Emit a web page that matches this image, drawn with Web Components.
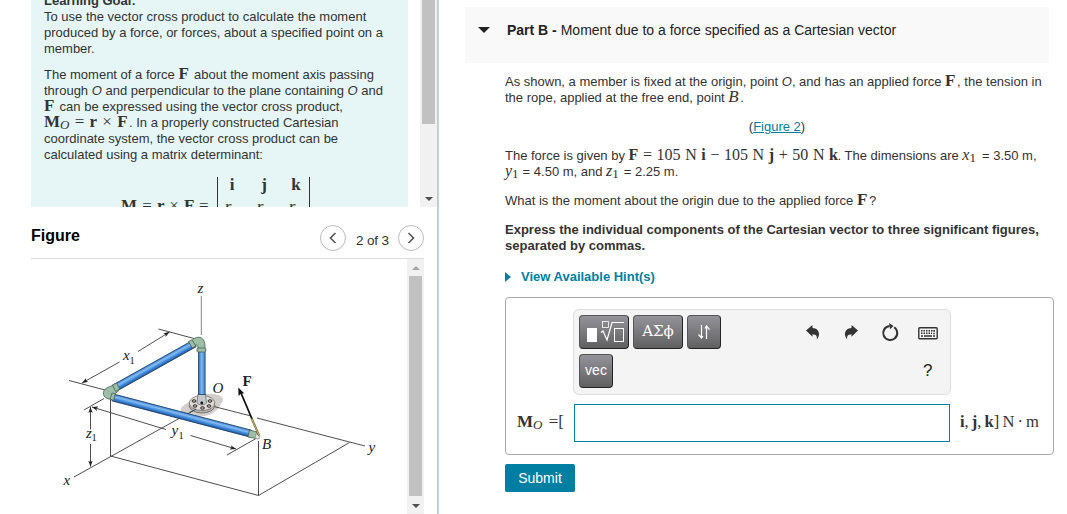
<!DOCTYPE html>
<html lang="en">
<head>
<meta charset="utf-8">
<title>Moment due to a force</title>
<style>
  html, body { margin: 0; height: 514px; overflow: hidden; background: #fff; }
  body { font-family: "Liberation Sans", Arial, sans-serif; font-size: 13px; line-height: 16px; color: #333; }
</style>
</head>
<body>
<assignment-page></assignment-page>

<script>
function define(name, html) {
  const template = document.createElement('template');
  template.innerHTML = html;
  customElements.define(name, class extends HTMLElement {
    constructor() {
      super();
      this.attachShadow({ mode: 'open' });
      this.shadowRoot.appendChild(template.content.cloneNode(true));
    }
  });
}

// Inline math. --w reserves the width of the run so the text after it lines up.
define('tex-math', `
  <style>
    :host {
      display: inline-block;
      width: var(--w, auto);
      white-space: nowrap;
      font: var(--fs, 17px)/0 "Liberation Serif", "Times New Roman", serif;
      word-spacing: var(--ws, 0);
    }
    ::slotted(sub) { font-size: 13px; line-height: 0; vertical-align: -2px; }
  </style>
  <slot></slot>
`);

class ScrollTrack extends HTMLElement {
  constructor() {
    super();
    this.attachShadow({ mode: 'open' });
  }

  connectedCallback() {
    const up = this.hasAttribute('up') ? '<div class="arrow up"></div>' : '';
    this.shadowRoot.innerHTML = `
      <style>
        :host { display: flex; flex-direction: column; align-items: center; width: 17px; background: #f1f1f1; flex: none; }
        .thumb { width: 13px; height: ${this.getAttribute('thumb')}px; background: #c1c1c1; }
        .arrow { width: 17px; height: 17px; display: flex; align-items: center; justify-content: center; }
        .arrow::before { content: ''; border: 4px solid transparent; }
        .up::before { border-bottom: 4px solid #a3a3a3; border-top: 0; }
        .down { margin-top: auto; }
        .down::before { border-top: 4px solid #505050; border-bottom: 0; }
      </style>
      ${up}
      <div class="thumb"></div>
      <div class="arrow down"></div>
    `;
  }
}
customElements.define('scroll-track', ScrollTrack);

define('learning-goal', `
  <style>
    :host { display: flex; height: 207px; overflow: hidden; justify-content: space-between; }
    .panel { width: 377px; box-sizing: border-box; padding: 0 0 0 13px; background: #e6f6f7; overflow: hidden; white-space: nowrap; }
    h2 { margin: -7px 0 0; font-size: 13px; line-height: 16px; }
    p { margin: 0 0 10px; }
    .det { display: flex; align-items: flex-start; padding: 4px 0 0 77px; font: bold 17px/20px "Liberation Serif", serif; }
    .lhs { width: 96px; margin-top: 19px; white-space: pre; word-spacing: 0.9px; }
    .matrix { display: grid; grid-template-columns: repeat(3, 32px); grid-template-rows: 15px 29px; align-items: center; width: 91px; height: 60px; border: solid #333; border-width: 0 1px; }
    .matrix span { width: 28px; text-align: center; }
    .matrix i { width: 20px; text-align: center; font-weight: normal; }
    .light { font-weight: normal; }
  </style>
  <div class="panel">
    <h2>Learning Goal:</h2>
    <p>To use the vector cross product to calculate the moment<br>produced by a force, or forces, about a specified point on a<br>member.</p>
    <p>The moment of a force <tex-math style="--w:12px"><b>F</b></tex-math> about the moment axis passing<br>through <i>O</i> and perpendicular to the plane containing <i>O</i> and<br><tex-math style="--w:12px"><b>F</b></tex-math> can be expressed using the vector cross product,<br><tex-math style="--w:85px;--ws:1px"><b>M</b><sub><i>O</i></sub> = <b>r</b> × <b>F</b></tex-math>. In a properly constructed Cartesian<br>coordinate system, the vector cross product can be<br>calculated using a matrix determinant:</p>
    <div class="det">
      <div class="lhs">M <span class="light">=</span> r <span class="light">×</span> F <span class="light">=</span></div>
      <div class="matrix"><span>i</span><span>j</span><span>k</span><i>r</i><i>r</i><i>r</i></div>
    </div>
  </div>
  <scroll-track thumb="124"></scroll-track>
`);

define('round-button', `
  <style>
    :host { display: flex; align-items: center; justify-content: center; width: 24px; height: 24px; border: 1px solid #bbb; border-radius: 50%; }
    svg { display: block; }
  </style>
  <svg width="24" height="24" fill="none" stroke="#555" stroke-width="1.6"><path d="M14.500 7 9.500 12l5 5"/></svg>
`);

define('statics-diagram', `
  <style>
    :host { display: block; width: 376px; height: 255px; }
    svg { display: block; }
    text { font-family: "Liberation Serif", "Times New Roman", serif; font-size: 15px; font-style: italic; fill: #222; }
    .sub { font-size: 10.5px; font-style: normal; }
    .force { font-weight: bold; font-style: normal; }
  </style>
  <svg width="376" height="255" viewBox="31 259 376 255">
    <defs>
      <linearGradient id="pipeV" x1="0" x2="1" y1="0" y2="0">
        <stop offset="0" stop-color="#2a6cb8"/><stop offset=".45" stop-color="#7db6ee"/><stop offset="1" stop-color="#3a84d8"/>
      </linearGradient>
      <linearGradient id="pipeH" x1="0" x2="0" y1="0" y2="1">
        <stop offset="0" stop-color="#3a82d4"/><stop offset=".35" stop-color="#86bbf0"/><stop offset=".65" stop-color="#3f8adb"/><stop offset="1" stop-color="#2059a3"/>
      </linearGradient>
      <marker id="tip" viewBox="0 0 8 6" refX="8" refY="3" markerWidth="6" markerHeight="4.5" orient="auto-start-reverse" markerUnits="userSpaceOnUse"><path d="M0 0 8 3 0 6 2 3z" fill="#222"/></marker>
    </defs>

    <!-- floor shadow and flange -->
    <path d="M181 412c-2-5 5-8 9-11 5-6 14-8 24-7 7 1 11 4 8 8-2 4-4 8-9 11-6 4-15 4-19 1-5-1-11 1-13-2z" fill="#d3cdcb"/>
    <g stroke="#3a3a3a" stroke-width=".9" fill="none">
      <path d="M201.300 296v39" stroke="#777"/>
      <path d="M110.500 399v57L258.500 495.500 349.500 442.500"/>
      <path d="M258.500 441v54.500"/>
      <path d="M196 409 74 477"/>
      <path d="M212 406l39 10M257 418l108 28"/>
      <path d="M158.500 329 194 338.500M69 380.500 105 390M84 410l20-11.500M227 455l29-16.500"/>
      <path d="M138 351.500 169.500 332" marker-end="url(#tip)"/>
      <path d="M119.500 362 82 383" marker-end="url(#tip)"/>
      <path d="M90.500 429.500V407" marker-end="url(#tip)"/>
      <path d="M90.500 444v22.500" marker-end="url(#tip)"/>
      <path d="M166 429.500 92 407" marker-end="url(#tip)"/>
      <path d="M190.500 435.500 236 449" marker-end="url(#tip)"/>
    </g>

    <ellipse cx="202" cy="405.500" rx="12.800" ry="7.500" fill="#b5b2b0" stroke="#555" stroke-width=".7"/>
    <ellipse cx="202" cy="403" rx="12.800" ry="7.500" fill="#e3dcd6" stroke="#666" stroke-width=".7"/>
    <g fill="#b9b2ad" stroke="#222" stroke-width=".9">
      <ellipse cx="194" cy="401" rx="1.900" ry="1.300"/><ellipse cx="210" cy="401" rx="1.900" ry="1.300"/>
      <ellipse cx="195" cy="406" rx="1.900" ry="1.300"/><ellipse cx="202.500" cy="408" rx="1.900" ry="1.300"/>
      <ellipse cx="209" cy="406" rx="1.900" ry="1.300"/>
    </g>
    <path d="M198 394h7.500l1 9c-2 2.500-7.500 2.500-9.500 0z" fill="#c5c8cd" stroke="#666" stroke-width=".7"/>
    <circle cx="201.800" cy="403" r="1.400" fill="#111"/>
    <path d="M196 409 190 412.500" stroke="#333" stroke-width=".8"/>

    <rect x="198.500" y="350" width="6.600" height="44.500" fill="url(#pipeV)" stroke="#1f3f66" stroke-width=".8"/>
    <g transform="translate(114 388.500) rotate(-29.200)"><rect y="-3.600" width="92" height="7.200" fill="url(#pipeH)" stroke="#1f3f66" stroke-width=".8"/></g>
    <g transform="translate(113 397.500) rotate(14.700)"><rect y="-3.500" width="142" height="7" fill="url(#pipeH)" stroke="#1f3f66" stroke-width=".8"/></g>

    <!-- elbows -->
    <g fill="#9dbfa8" stroke="#47604f" stroke-width=".8">
      <path d="M192 340.500c4-4.500 9.500-4 11.500-.5 1.500 2.500 1.500 5 1.500 8.500h-7c0-3.500-1-4.500-3.500-2.500z"/>
      <path d="M188.500 341.500l3.500-1.800 3.800 6.200-3.500 2.200z"/>
      <rect x="197" y="348" width="8.800" height="4" rx="1"/>
      <path d="M115.500 385c-6 1-13.500 4-12 9.500 1 4 5 4 8.500 5.500l2.500-6 4-3z"/>
      <path d="M112.500 385l4-2 3.200 6-4 2.500z"/>
      <path d="M112 393l3.300.8-1.700 6.600-3.500-1.200z"/>
      <path d="M249.500 430l7.500 2c1.500 2 1 5-.5 6.500l-8.500-1.500z"/>
    </g>
    <path d="M256 433.500l4 2-1 3.500-4-.5z" fill="#e1e5dc" stroke="#777" stroke-width=".6"/>

    <path d="M251.500 418 259 435.500" stroke="#6b5a2c" stroke-width="2"/>
    <path d="M251.500 418 259 435.500" stroke="#d5bd76" stroke-width=".9"/>
    <path d="M251.800 418.500 241 393" stroke="#111" stroke-width="1.800"/>
    <path d="M238.300 387.500 244.200 393.300 240.800 393.700 238.500 396z" fill="#111"/>

    <text x="197.500" y="292.500">z</text>
    <text x="123" y="360">x</text><text class="sub" x="129.500" y="363.500">1</text>
    <text x="86" y="437.500">z</text><text class="sub" x="91.500" y="441">1</text>
    <text x="171.500" y="435">y</text><text class="sub" x="178.500" y="438.500">1</text>
    <text x="212.500" y="393">O</text>
    <text class="force" x="242.500" y="386">F</text>
    <text x="262" y="449">B</text>
    <text x="368.500" y="452">y</text>
    <text x="63.500" y="485">x</text>
  </svg>
`);

define('figure-panel', `
  <style>
    :host { display: flex; flex-direction: column; width: 393px; height: 307px; }
    header { display: flex; align-items: flex-start; justify-content: space-between; height: 52px; box-sizing: border-box; padding-top: 18px; border-bottom: 1px solid #ddd; }
    h3 { margin: 2px 0 0; font-size: 16px; line-height: 18px; color: #000; }
    nav { display: flex; align-items: center; gap: 10px; font-size: 13.500px; }
    nav span { padding-top: 5px; width: 32px; white-space: nowrap; text-align: center; letter-spacing: -0.150px; }
    .next { transform: scaleX(-1); }
    .body { display: flex; height: 255px; }
  </style>
  <header>
    <h3>Figure</h3>
    <nav><round-button></round-button><span>2 of 3</span><round-button class="next"></round-button></nav>
  </header>
  <div class="body">
    <statics-diagram></statics-diagram>
    <scroll-track up thumb="220"></scroll-track>
  </div>
`);

define('part-header', `
  <style>
    :host { display: flex; align-items: center; gap: 17px; width: 584px; height: 56px; padding: 0 0 10px 13px; box-sizing: border-box; background: #f9f9f9; font-size: 14px; color: #222; white-space: nowrap; }
    .caret { border: 6px solid transparent; border-top: 6px solid #222; border-bottom: 0; }
  </style>
  <div class="caret"></div>
  <div><slot></slot></div>
`);

define('problem-text', `
  <style>
    :host { display: block; padding-top: 11px; white-space: nowrap; }
    p { margin: 0 0 13px; }
    .center { text-align: center; }
    a { color: #007fa3; text-decoration: underline; }
    .hint { display: flex; align-items: center; gap: 10px; height: 16px; margin: 15px 0 -1px; color: #007fa3; font-weight: bold; }
    .hint::before { content: ''; border: 5px solid transparent; border-left: 6px solid #007fa3; border-right: 0; }
  </style>
  <p>As shown, a member is fixed at the origin, point <i>O</i>, and has an applied force <tex-math style="--w:12px"><b>F</b></tex-math>, the tension in<br>the rope, applied at the free end, point <tex-math style="--w:12px"><i>B</i></tex-math>.</p>
  <p class="center">(<a>Figure 2</a>)</p>
  <p>The force is given by <tex-math style="--w:209px;--fs:16px;--ws:0.600px"><b>F</b> = 105 N <b>i</b> − 105 N <b>j</b> + 50 N <b>k</b></tex-math>. The dimensions are <tex-math style="--w:16px;--fs:16px"><i>x</i><sub>1</sub></tex-math> = 3.50 m,<br><tex-math style="--w:14px;--fs:16px"><i>y</i><sub>1</sub></tex-math> = 4.50 m, and <tex-math style="--w:14px;--fs:16px"><i>z</i><sub>1</sub></tex-math> = 2.25 m.</p>
  <p>What is the moment about the origin due to the applied force <tex-math style="--w:12px"><b>F</b></tex-math>?</p>
  <p><b>Express the individual components of the Cartesian vector to three significant figures,<br>separated by commas.</b></p>
  <div class="hint">View Available Hint(s)</div>
`);

define('tool-button', `
  <style>
    :host { display: flex; align-items: center; justify-content: center; box-sizing: border-box; width: 34px; height: 34px; border: 1px solid #555; border-right-color: #222; border-bottom-color: #222; border-radius: 4px; background: linear-gradient(#94939a, #606060); color: #fff; font-size: 14px; }
    :host([wide]) { width: 50px; }
  </style>
  <slot></slot>
`);

define('math-toolbar', `
  <style>
    :host { display: flex; justify-content: space-between; box-sizing: border-box; width: 378px; height: 86px; padding: 5px 10px 5px 5px; border: 1px solid #ddd; border-radius: 6px; background: #f4f4f4; }
    .left { display: flex; flex-wrap: wrap; gap: 5px 4px; width: 160px; align-content: flex-start; }
    .greek { font-family: "DejaVu Serif", serif; font-size: 15px; padding-bottom: 2px; }
    .vec { padding-bottom: 2px; }
    .right { display: grid; grid-template-columns: repeat(4, 38.300px); grid-auto-rows: 38px; justify-items: center; align-items: center; margin: -1px -7px 0 0; }
    .help { grid-column: 4; font-size: 17px; color: #222; }
    svg { display: block; }
  </style>
  <div class="left">
    <tool-button wide>
      <svg width="40" height="26" fill="none" stroke="#fff"><rect x="3" y="9" width="10" height="14" fill="#fff" stroke="none"/><rect x="18.500" y="2.500" width="6" height="6" stroke-width=".8"/><path d="M17 13.500l2-1.500 4 9 5-17.500h12" stroke-width="1.200"/><rect x="30.500" y="9.500" width="9" height="13"/></svg>
    </tool-button>
    <tool-button wide><span class="greek">ΑΣϕ</span></tool-button>
    <tool-button>
      <svg width="14" height="16" fill="none" stroke="#fff" stroke-width="1.200"><path d="M4.500 1v13M1.500 10.500l3 3.500 1.500-2M9.500 15V2M8 4.500 9.500 2l3 3.500"/></svg>
    </tool-button>
    <tool-button><span class="vec">vec</span></tool-button>
  </div>
  <div class="right">
    <svg width="16" height="18" fill="#333"><path d="M1 6.500 7.500 1v3c4 .3 6.500 2.500 6.500 6 0 2-.8 3.800-2.200 5.500.6-3.500-.8-5-4.300-5.200v2.500z"/></svg>
    <svg width="16" height="18" fill="#333"><path d="M15 6.500 8.500 1v3C4.500 4.300 2 6.500 2 10c0 2 .8 3.800 2.200 5.500-.6-3.500.8-5 4.300-5.200v2.500z"/></svg>
    <svg width="18" height="20" fill="none" stroke="#333" stroke-width="2"><path d="M13.200 4.200A7 7 0 1 1 8.500 3"/><path d="M8 0l4.500 3L9 6.200z" fill="#333" stroke="none"/></svg>
    <svg width="20" height="14" fill="none" stroke="#333"><rect x=".8" y="1.800" width="18.400" height="11" rx="1" stroke-width="1.400"/><path d="M3 4.700h14M3 7.200h11M16 4.200v4" stroke-dasharray="1.500 1" stroke-width="1.400"/><path d="M3 10h2M6 10h8M15 10h2" stroke-width="1.300"/></svg>
    <span class="help">?</span>
  </div>
`);

define('answer-box', `
  <style>
    :host { display: grid; grid-template-columns: 56px 378px 1fr; row-gap: 9px; box-sizing: border-box; width: 549px; height: 158px; margin-top: 13px; padding: 11px 0 0 11px; border: 1px solid #aaa; border-radius: 4px; align-content: start; align-items: center; }
    math-toolbar { grid-column: 2; }
    .label { grid-column: 1; white-space: nowrap; }
    .field { width: 374px; height: 36px; margin-left: 1px; border: 1px solid #007fa3; background: #fff; }
    .unit { padding-left: 9px; white-space: nowrap; }
  </style>
  <math-toolbar></math-toolbar>
  <div class="label"><tex-math style="--ws:2px"><b>M</b><sub><i>O</i></sub> =[</tex-math></div>
  <div class="field"></div>
  <div class="unit"><tex-math style="--fs:16.500px;--ws:-1px"><b>i</b>, <b>j</b>, <b>k</b>] N · m</tex-math></div>
`);

define('submit-button', `
  <style>
    :host { display: flex; align-items: center; justify-content: center; width: 70px; height: 28px; margin-top: 9px; border-radius: 2px; background: #007fa3; color: #fff; font-size: 14px; }
  </style>
  <slot></slot>
`);

define('assignment-page', `
  <style>
    :host { display: flex; height: 514px; overflow: hidden; }
    .left { width: 438px; box-sizing: border-box; padding-left: 31px; border-right: 1px solid #b9cadb; flex: none; }
    .divider { width: 1px; background: #c4d3e2; }
    .right { padding: 7px 0 0 26px; }
    .content { width: 549px; padding-left: 40px; }
    .narrow { width: 544px; }
  </style>
  <div class="left">
    <learning-goal></learning-goal>
    <figure-panel></figure-panel>
  </div>
  <div class="divider"></div>
  <div class="right">
    <part-header><b>Part B - </b>Moment due to a force specified as a Cartesian vector</part-header>
    <div class="content">
      <problem-text class="narrow"></problem-text>
      <answer-box></answer-box>
      <submit-button>Submit</submit-button>
    </div>
  </div>
`);
</script>
</body>
</html>
